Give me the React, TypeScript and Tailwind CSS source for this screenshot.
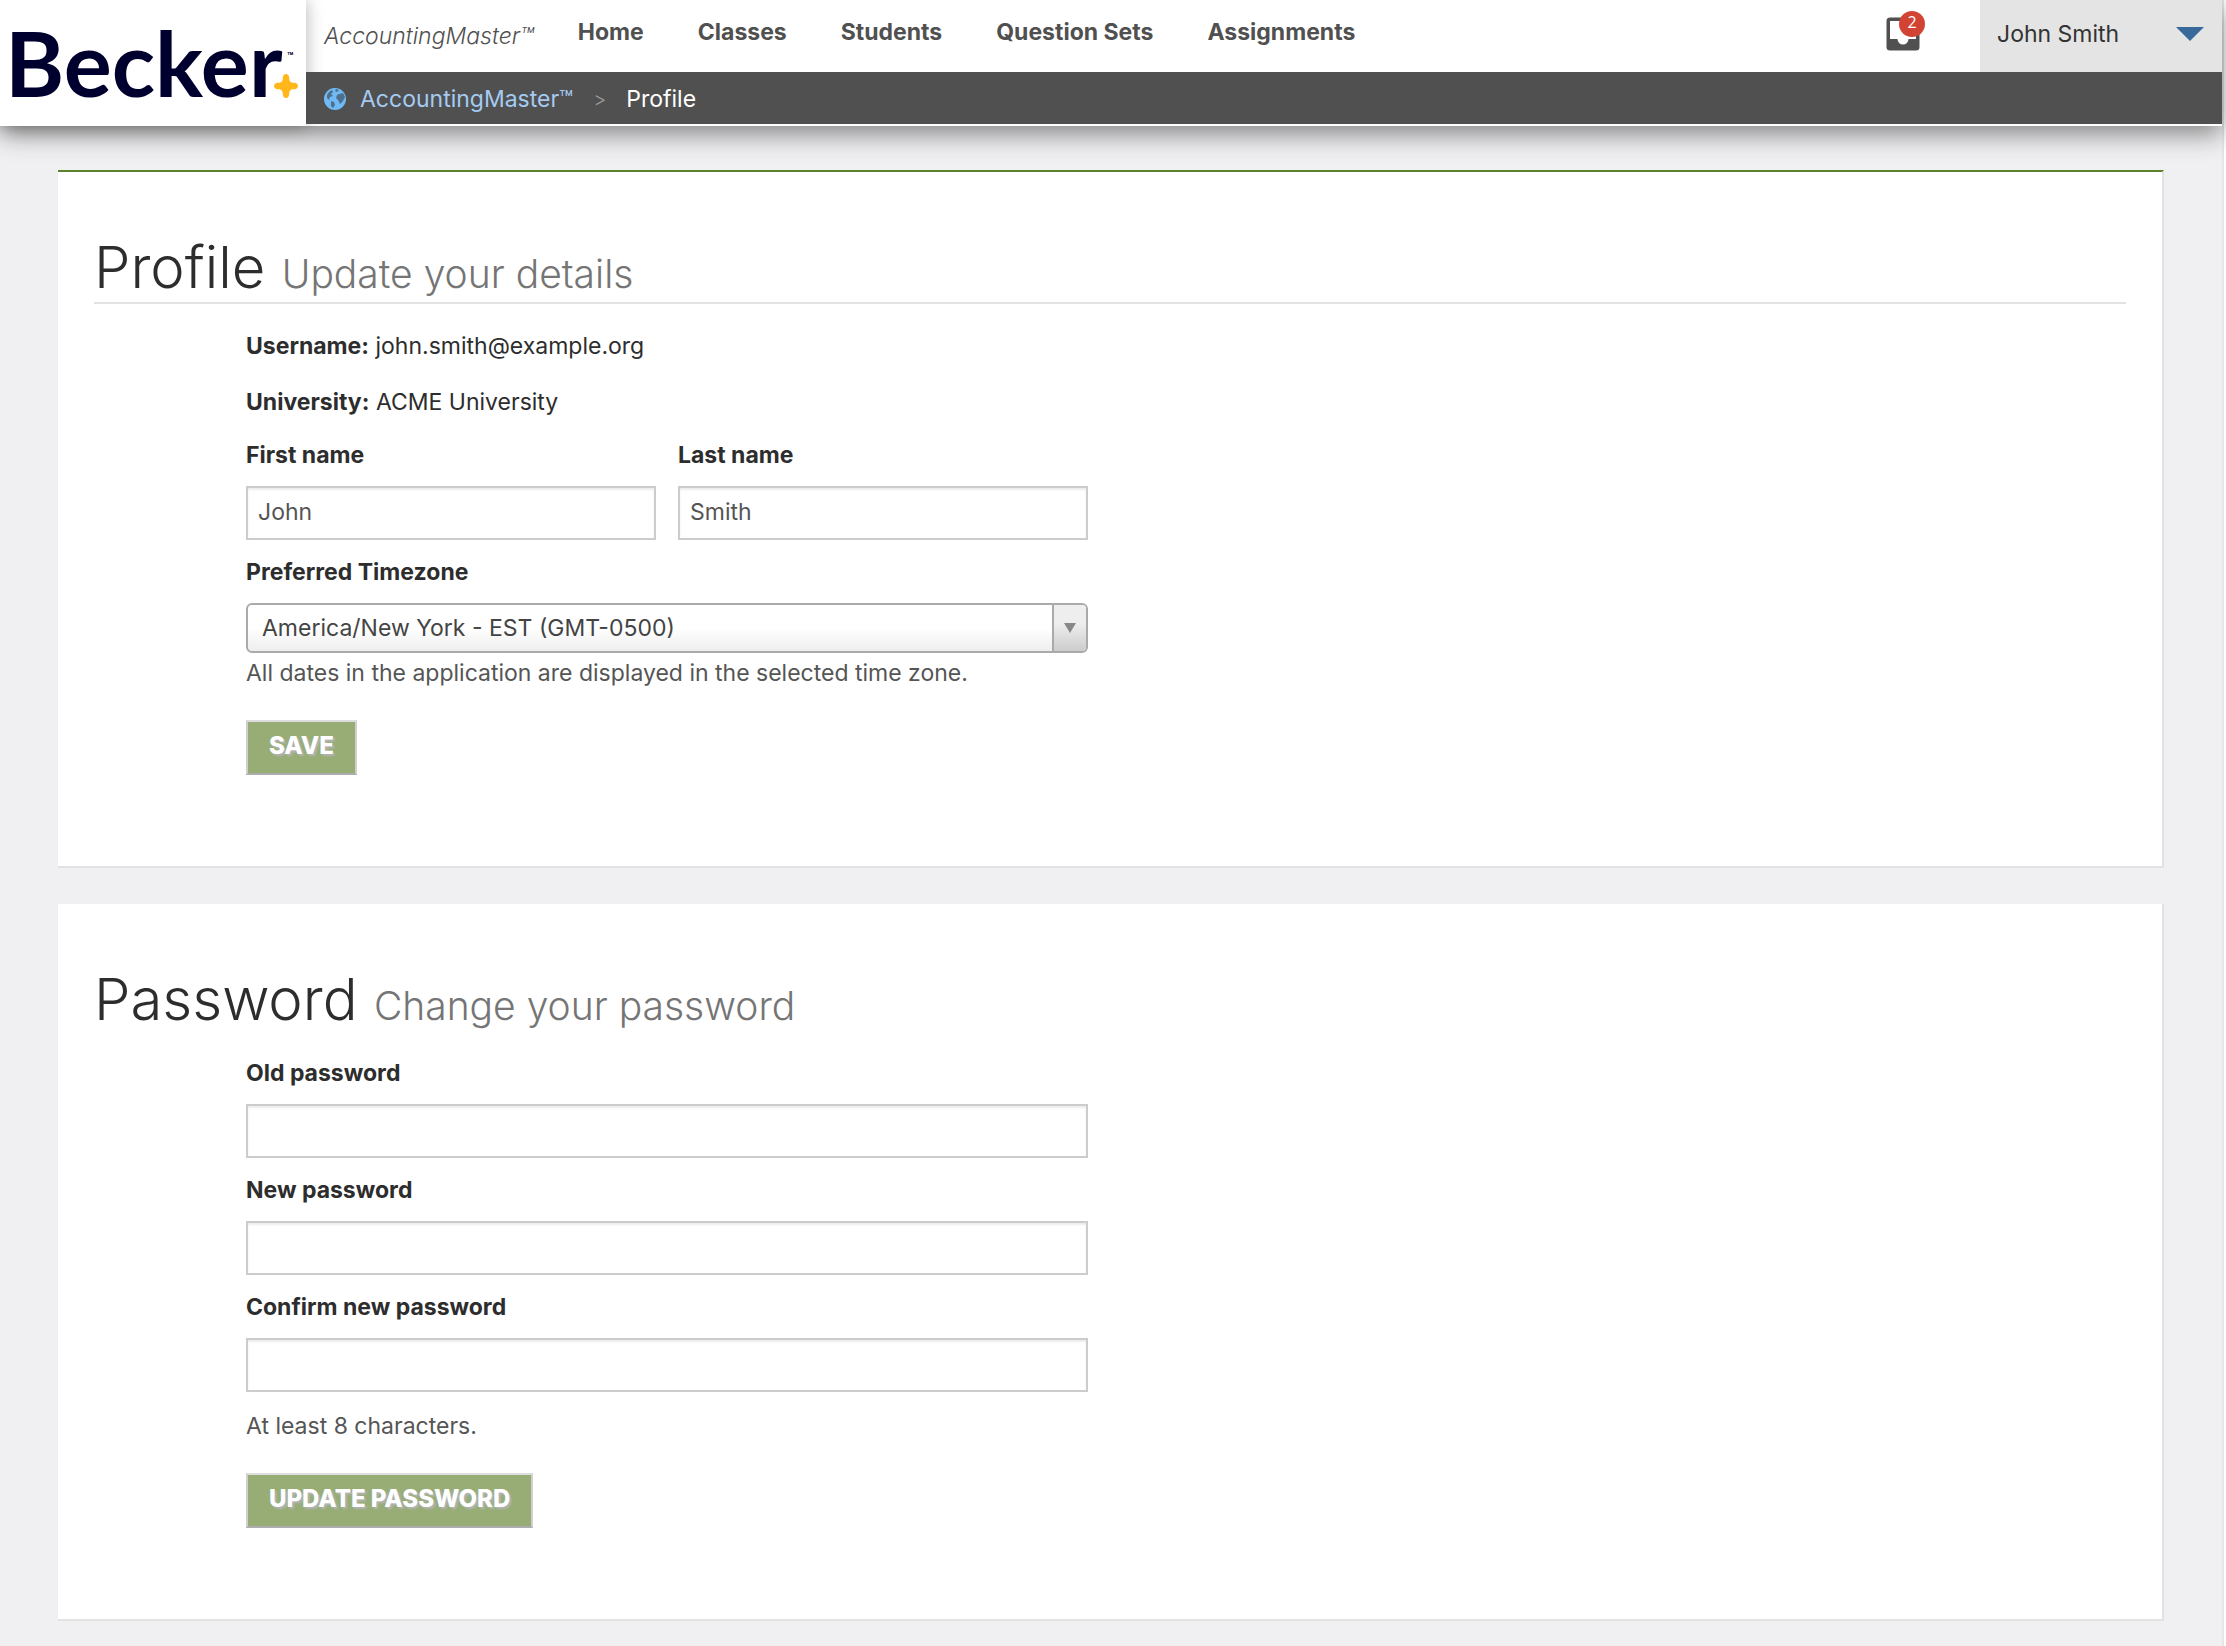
import type { ReactNode } from "react"

const NAV_ITEMS = ["Home", "Classes", "Students", "Question Sets", "Assignments"]

function BeckerLogo() {
  return (
    <svg viewBox="0 0 306 126" className="block h-[126px] w-[306px]" role="img" aria-label="Becker">
      <text x="5" y="97" fontSize="90" fontWeight="700" fontFamily="Lato, sans-serif" fill="#00002f">
        Becker
      </text>
      <text x="287" y="60" fontSize="10" fontWeight="700" fontFamily="Inter, sans-serif" fill="#00002f">
        ™
      </text>
      <path
        d="M286 74C288 74 289 75.500 289.200 78C289.400 81.500 290.500 82.600 294 82.800C296.500 83 298 84 298 86C298 88 296.500 89 294 89.200C290.500 89.400 289.400 90.500 289.200 94C289 96.500 288 98 286 98C284 98 283 96.500 282.800 94C282.600 90.500 281.500 89.400 278 89.200C275.500 89 274 88 274 86C274 84 275.500 83 278 82.800C281.500 82.600 282.600 81.500 282.800 78C283 75.500 284 74 286 74Z"
        fill="#ffb71b"
      />
    </svg>
  )
}

function GlobeIcon() {
  return (
    <svg viewBox="0 0 24 24" className="size-6 shrink-0" aria-hidden="true">
      <circle cx="12" cy="12" r="11" fill="#6fb9f5" />
      <path d="M6 5L9 3L10 5L8 7L10 9L7 10L6 13L4 11L4 8ZM8 14L11 15L12 18L10 21L8 19Z" fill="#4f6f8a" />
      <path d="M13 2L16 3L14 5L12 4ZM16 7L20 6L22 10L20 14L17 17L15 13L13 11L14 8Z" fill="#4f6f8a" />
    </svg>
  )
}

function InboxIcon() {
  return (
    <svg viewBox="0 0 34 34" className="block size-[34px]" aria-hidden="true">
      <path
        d="M4 0.500H30Q33.500 0.500 33.500 4V30Q33.500 33.500 30 33.500H4Q0.500 33.500 0.500 30V4Q0.500 0.500 4 0.500ZM4 4V22H11.500A5.500 5.500 0 0 0 22.500 22H30V4Z"
        fill="#505050"
        fillRule="evenodd"
      />
    </svg>
  )
}

function Header() {
  return (
    <header className="relative z-10 flex bg-white shadow-[0_8px_24px_rgba(0,0,0,0.45)]">
      <a href="#" className="shrink-0 bg-white shadow-[0_0_16px_rgba(0,0,0,0.3)]">
        <BeckerLogo />
      </a>
      <div className="flex min-w-0 flex-1 flex-col">
        <div className="flex h-[72px] items-stretch text-[#505050]">
          <span className="self-center pl-[18px] font-light italic">AccountingMaster™</span>
          <nav className="flex flex-1 items-center gap-[54px] pb-2 pl-11 font-bold">
            {NAV_ITEMS.map((item) => (
              <a key={item} href="#">
                {item}
              </a>
            ))}
          </nav>
          <div className="flex items-center pr-[60px] pb-1">
            <button type="button" aria-label="Notifications" className="relative">
              <InboxIcon />
              <span className="absolute -top-1.5 left-[13px] flex size-[26px] items-center justify-center rounded-full bg-[#d14434] pb-1 font-['Open_Sans'] text-[16px] leading-[20px] text-white">
                2
              </span>
            </button>
          </div>
          <button
            type="button"
            className="flex w-[242px] items-center justify-between bg-[#e4e4e4] pl-[17px] pr-[18px] pb-1 text-[#333]"
          >
            John Smith
            <svg viewBox="0 0 28 14" className="h-3.5 w-7" aria-hidden="true">
              <path d="M0 0H28L14 14Z" fill="#38699b" />
            </svg>
          </button>
        </div>
        <div className="flex h-[52px] items-center bg-[#505050] pt-0.5 pl-[17px] text-white">
          <GlobeIcon />
          <a href="#" className="pl-[13px] text-[#a5cbf2]">
            AccountingMaster™
          </a>
          <span className="px-5 text-[20px] font-light text-[#999]">&gt;</span>
          <span>Profile</span>
        </div>
      </div>
    </header>
  )
}

interface SectionTitleProps {
  title: string
  subtitle: string
  className?: string
}

function SectionTitle({ title, subtitle, className = "" }: SectionTitleProps) {
  return (
    <h1 className={`text-[58px] font-light leading-[70px] text-[#2d2d2d] ${className}`}>
      {title} <small className="text-[39px] leading-none text-[#757575]">{subtitle}</small>
    </h1>
  )
}

interface FieldProps {
  id: string
  label: string
  type?: string
  value?: string
}

function Field({ id, label, type = "text", value }: FieldProps) {
  return (
    <div className="min-w-0 flex-1">
      <label htmlFor={id} className="mb-[15px] block font-bold">
        {label}
      </label>
      <input
        id={id}
        type={type}
        defaultValue={value}
        className="block h-[54px] w-full border-2 border-[#ccc] bg-white px-2.5 pb-0.5 text-[#555] shadow-[inset_0_2px_2px_rgba(0,0,0,0.075)]"
      />
    </div>
  )
}

function SubmitButton({ children }: { children: ReactNode }) {
  return (
    <button
      type="submit"
      className="block h-[55px] border-2 border-t-[#dedede] border-r-[#cfcfcf] border-b-[#adadad] border-l-[#cfcfcf] bg-[#97ad75] px-[21px] pb-1 text-[24px] font-extrabold uppercase text-white [text-shadow:2px_2px_2px_#b4b4b4]"
    >
      {children}
    </button>
  )
}

export default function App() {
  return (
    <div className="bg-white pr-0.5 font-['Inter',sans-serif] text-[23px] leading-[32px] text-[#2d2d2d]">
      <div className="min-h-screen border-r-2 border-[#e6e6e6] bg-[#f0f0f2]">
        <Header />
        <main className="flex flex-col gap-9 px-[58px] pt-11 pb-6">
          <section className="border-t-2 border-r-2 border-b-2 border-t-[#5a822a] border-r-[#e2e2e2] border-b-[#e2e2e2] bg-white px-9 pt-[60px] pb-[91px]">
            <SectionTitle title="Profile" subtitle="Update your details" className="border-b-2 border-[#e2e2e2]" />
            <form className="ml-[152px] max-w-[842px] pt-[26px]" onSubmit={(e) => e.preventDefault()}>
              <p>
                <strong>Username:</strong> john.smith@example.org
              </p>
              <p className="mt-6">
                <strong>University:</strong> ACME University
              </p>
              <div className="mt-[21px] flex gap-[22px]">
                <Field id="first-name" label="First name" value="John" />
                <Field id="last-name" label="Last name" value="Smith" />
              </div>
              <label htmlFor="timezone" className="mt-4 mb-[15px] block font-bold">
                Preferred Timezone
              </label>
              <div className="relative">
                <select
                  id="timezone"
                  className="block h-[50px] w-full appearance-none rounded-md border-2 border-[#aaa] bg-linear-to-b from-white from-50% to-[#eee] pl-3.5 pr-12 text-[#444]"
                >
                  <option>America/New York - EST (GMT-0500)</option>
                </select>
                <span className="pointer-events-none absolute inset-y-0.5 right-0.5 flex w-[34px] items-center justify-center rounded-r border-l-2 border-[#aaa] bg-linear-to-b from-[#eee] from-40% to-[#ccc]">
                  <svg viewBox="0 0 12 10" className="h-2.5 w-3" aria-hidden="true">
                    <path d="M0 0H12L6 10Z" fill="#888" />
                  </svg>
                </span>
              </div>
              <p className="mt-1 mb-[31px] text-[#555]">
                All dates in the application are displayed in the selected time zone.
              </p>
              <SubmitButton>Save</SubmitButton>
            </form>
          </section>

          <section className="border-r-2 border-b-2 border-[#e2e2e2] bg-white px-9 pt-[60px] pb-[91px]">
            <SectionTitle title="Password" subtitle="Change your password" />
            <form className="ml-[152px] max-w-[842px] pt-[23px]" onSubmit={(e) => e.preventDefault()}>
              <div className="flex flex-col gap-4">
                <Field id="old-password" label="Old password" type="password" />
                <Field id="new-password" label="New password" type="password" />
                <Field id="confirm-password" label="Confirm new password" type="password" />
              </div>
              <p className="mt-[18px] mb-[31px] text-[#555]">At least 8 characters.</p>
              <SubmitButton>Update password</SubmitButton>
            </form>
          </section>
        </main>
      </div>
    </div>
  )
}
